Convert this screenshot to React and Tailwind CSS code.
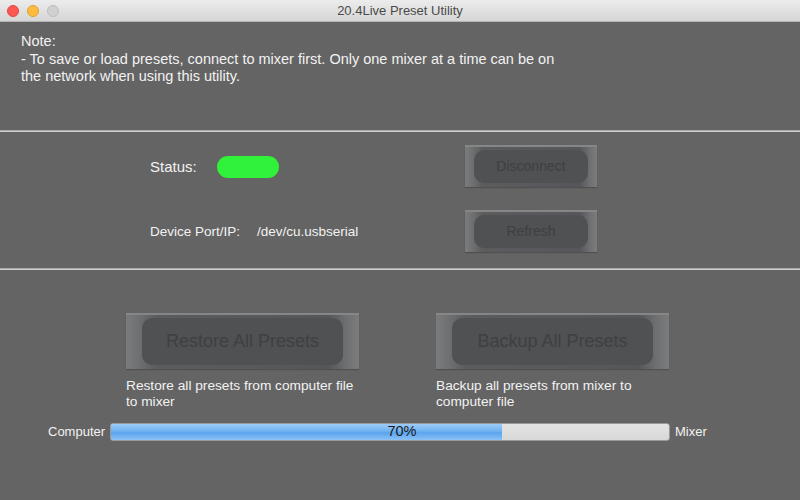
import React from "react";

const font = { fontFamily: '"Liberation Sans", Arial, sans-serif' };

function MacButton({ label, w, h, text }) {
    return (
        <div
            className={`${w} ${h} relative border-t-2 border-[#868686] bg-[linear-gradient(to_right,#7b7c7d_0%,#707172_5%,#5a5c5e_13%,#55575a_87%,#707172_95%,#7b7c7d_100%)] shadow-[0_1px_1px_rgba(0,0,0,0.2)] flex items-stretch px-[7%] pt-[3px] pb-[4px]`}
        >
            <div
                className={`flex-1 rounded-[10px] bg-[#4f5153] flex items-center justify-center text-[#3e4042] ${text}`}
            >
                {label}
            </div>
        </div>
    );
}

export default function App() {
    return (
        <div
            className="w-[800px] h-[500px] bg-[#646464] flex flex-col overflow-hidden text-[#f2f2f2]"
            style={font}
        >
            {/* title bar */}
            <div className="h-[22px] shrink-0 bg-[linear-gradient(#ececec,#d6d6d6)] border-b border-[#b4b4b4] flex items-center relative">
                <div className="flex items-center gap-[8px] pl-[7px]">
                    <div className="w-[12px] h-[12px] rounded-full bg-[#fc5753] border border-[#df4744]" />
                    <div className="w-[12px] h-[12px] rounded-full bg-[#fdbc40] border border-[#de9f34]" />
                    <div className="w-[12px] h-[12px] rounded-full bg-[#d0d0d0] border border-[#bdbdbd]" />
                </div>
                <div className="absolute inset-0 flex items-center justify-center text-[13px] text-[#4a4a4a]">
                    20.4Live Preset Utility
                </div>
            </div>

            {/* note */}
            <div className="h-[108px] shrink-0 pl-[21px] pt-[11px] text-[14.5px] leading-[17.5px]">
                <div>Note:</div>
                <div className="w-[545px]">
                    - To save or load presets, connect to mixer first. Only one mixer at a time can be on
                    the network when using this utility.
                </div>
            </div>

            <div className="h-[2px] shrink-0 bg-[#a9a9a9] border-b border-[#cfcfcf]" />

            {/* connection */}
            <div className="h-[136px] shrink-0 flex pl-[150px] pt-[13px]">
                <div className="w-[315px] flex flex-col">
                    <div className="h-[42px] flex items-center pt-[2px]">
                        <span className="text-[15px] w-[67px]">Status:</span>
                        <div className="w-[62px] h-[22px] rounded-full bg-[#31f23b]" />
                    </div>
                    <div className="h-[23px]" />
                    <div className="h-[42px] flex items-center text-[13.5px] pt-[3px]">
                        <span className="w-[107px]">Device Port/IP:</span>
                        <span>/dev/cu.usbserial</span>
                    </div>
                </div>
                <div className="flex flex-col gap-[23px]">
                    <MacButton label="Disconnect" w="w-[132px]" h="h-[42px]" text="text-[14px]" />
                    <MacButton label="Refresh" w="w-[132px]" h="h-[42px]" text="text-[14px]" />
                </div>
            </div>

            <div className="h-[2px] shrink-0 bg-[#a9a9a9] border-b border-[#cfcfcf]" />

            {/* presets */}
            <div className="flex-1 flex flex-col pt-[43px]">
                <div className="flex pl-[126px] gap-[77px]">
                    <div className="w-[233px] flex flex-col">
                        <MacButton label="Restore All Presets" w="w-[233px]" h="h-[56px]" text="text-[18px]" />
                        <div className="mt-[9px] text-[13.7px] leading-[16px] w-[232px]">
                            Restore all presets from computer file to mixer
                        </div>
                    </div>
                    <div className="w-[233px] flex flex-col">
                        <MacButton label="Backup All Presets" w="w-[233px]" h="h-[56px]" text="text-[18px]" />
                        <div className="mt-[9px] text-[13.7px] leading-[16px] w-[210px]">
                            Backup all presets from mixer to computer file
                        </div>
                    </div>
                </div>

                <div className="mt-[12px] flex items-center pl-[48px] text-[13px]">
                    <span className="w-[62px]">Computer</span>
                    <div className="w-[560px] h-[18px] rounded-[3px] border border-[#9a9a9a] bg-[linear-gradient(#e4e4e4,#d8d8d8)] relative overflow-hidden">
                        <div className="h-full w-[70%] bg-[linear-gradient(#9dcbf7_0%,#6fb2f3_45%,#5aa4ee_55%,#8cc2f5_100%)]" />
                        <div className="absolute inset-0 flex items-center justify-center pl-[24px] text-[14.5px] text-[#1a1a1a]">
                            70%
                        </div>
                    </div>
                    <span className="ml-[5px]">Mixer</span>
                </div>
            </div>
        </div>
    );
}
